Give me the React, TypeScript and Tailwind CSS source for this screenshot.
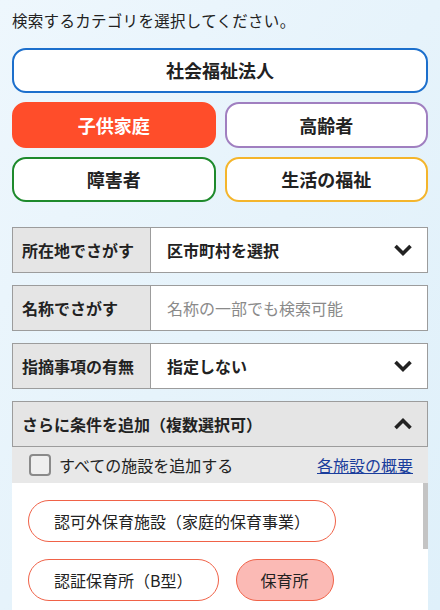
import React, { useState } from 'react';

const FONT = { fontFamily: '"Noto Sans CJK JP", "Noto Sans", sans-serif' };

const Chevron = ({ up = false }: { up?: boolean }) => (
  <svg width="20" height="14" viewBox="0 0 20 14" className={up ? 'rotate-180' : ''}>
    <path d="M2.5 3 L10 10.5 L17.5 3" fill="none" stroke="#222" strokeWidth="3.6" strokeLinecap="butt" strokeLinejoin="miter" />
  </svg>
);

const App: React.FC = () => {
  const [checked, setChecked] = useState(false);

  return (
    <div style={FONT} className="w-[440px] h-[610px] overflow-hidden bg-gradient-to-br from-[#eef7fd] via-[#e6f3fb] to-[#dff0fa] text-[#222]">
      <div className="px-3 pt-[7px]">
        <p className="text-[15.5px] leading-[26px] tracking-[0.3px]">検索するカテゴリを選択してください。</p>

        <div className="mt-[15px] flex flex-col gap-[9px]">
          <button className="h-[45px] w-full rounded-[14px] border-2 border-[#1c6fcc] bg-white text-[18px] font-bold">社会福祉法人</button>
          <div className="grid grid-cols-2 gap-[9px]">
            <button className="h-[46px] rounded-[14px] border-2 border-[#ff4d2a] bg-[#ff4d2a] text-[18px] font-bold text-white">子供家庭</button>
            <button className="h-[46px] rounded-[14px] border-2 border-[#a07fc0] bg-white text-[18px] font-bold">高齢者</button>
            <button className="h-[45px] rounded-[14px] border-2 border-[#1e8a2c] bg-white text-[18px] font-bold">障害者</button>
            <button className="h-[45px] rounded-[14px] border-2 border-[#f4b52c] bg-white text-[18px] font-bold">生活の福祉</button>
          </div>
        </div>

        <div className="mt-[25px] flex flex-col gap-[12px]">
          <div className="flex h-[46px] border border-[#9c9c9c] bg-white">
            <div className="flex w-[138px] items-center border-r border-[#9c9c9c] bg-[#e5e5e5] pl-[9px] text-[16px] font-bold">所在地でさがす</div>
            <div className="flex flex-1 items-center justify-between pl-[16px] pr-[14px] text-[16px] font-bold">
              <span>区市町村を選択</span>
              <Chevron />
            </div>
          </div>
          <div className="flex h-[46px] border border-[#9c9c9c] bg-white">
            <div className="flex w-[138px] items-center border-r border-[#9c9c9c] bg-[#e5e5e5] pl-[9px] text-[16px] font-bold">名称でさがす</div>
            <input
              className="flex-1 bg-white pl-[16px] text-[16px] outline-none placeholder:text-[#8a8a8a]"
              placeholder="名称の一部でも検索可能"
            />
          </div>
          <div className="flex h-[46px] border border-[#9c9c9c] bg-white">
            <div className="flex w-[138px] items-center border-r border-[#9c9c9c] bg-[#e5e5e5] pl-[9px] text-[16px] font-bold">指摘事項の有無</div>
            <div className="flex flex-1 items-center justify-between pl-[16px] pr-[14px] text-[16px] font-bold">
              <span>指定しない</span>
              <Chevron />
            </div>
          </div>

          <div className="flex flex-col">
            <div className="flex h-[46px] items-center justify-between border border-[#9c9c9c] bg-[#e5e5e5] pl-[9px] pr-[14px] text-[16px] font-bold">
              <span>さらに条件を追加（複数選択可）</span>
              <Chevron up />
            </div>
            <div className="flex h-[36px] items-center justify-between bg-[#e8e8e8] pl-[17px] pr-[15px]">
              <label className="flex items-center gap-[8px] text-[16px]">
                <span
                  onClick={() => setChecked(!checked)}
                  className="h-[22px] w-[22px] rounded-[4px] border-2 border-[#8a8a8a] bg-[#efefef]"
                />
                すべての施設を追加する
              </label>
              <a className="text-[16px] text-[#1a3d9c] underline">各施設の概要</a>
            </div>
            <div className="flex h-[140px] bg-white">
              <div className="flex flex-1 flex-col items-start gap-[17px] pl-[16px] pt-[17px]">
                <button className="h-[42px] rounded-full border border-[#f06248] bg-white px-[25px] text-[16px]">認可外保育施設（家庭的保育事業）</button>
                <div className="flex gap-[17px]">
                  <button className="h-[42px] rounded-full border border-[#f06248] bg-white px-[25px] text-[16px]">認証保育所（B型）</button>
                  <button className="h-[42px] w-[98px] rounded-full border border-[#f06248] bg-[#fbbab5] text-[16px]">保育所</button>
                </div>
              </div>
              <div className="w-[5px]">
                <div className="h-[66px] w-[5px] bg-[#c4c4c4]" />
              </div>
            </div>
          </div>
        </div>
      </div>
    </div>
  );
};

export default App;
